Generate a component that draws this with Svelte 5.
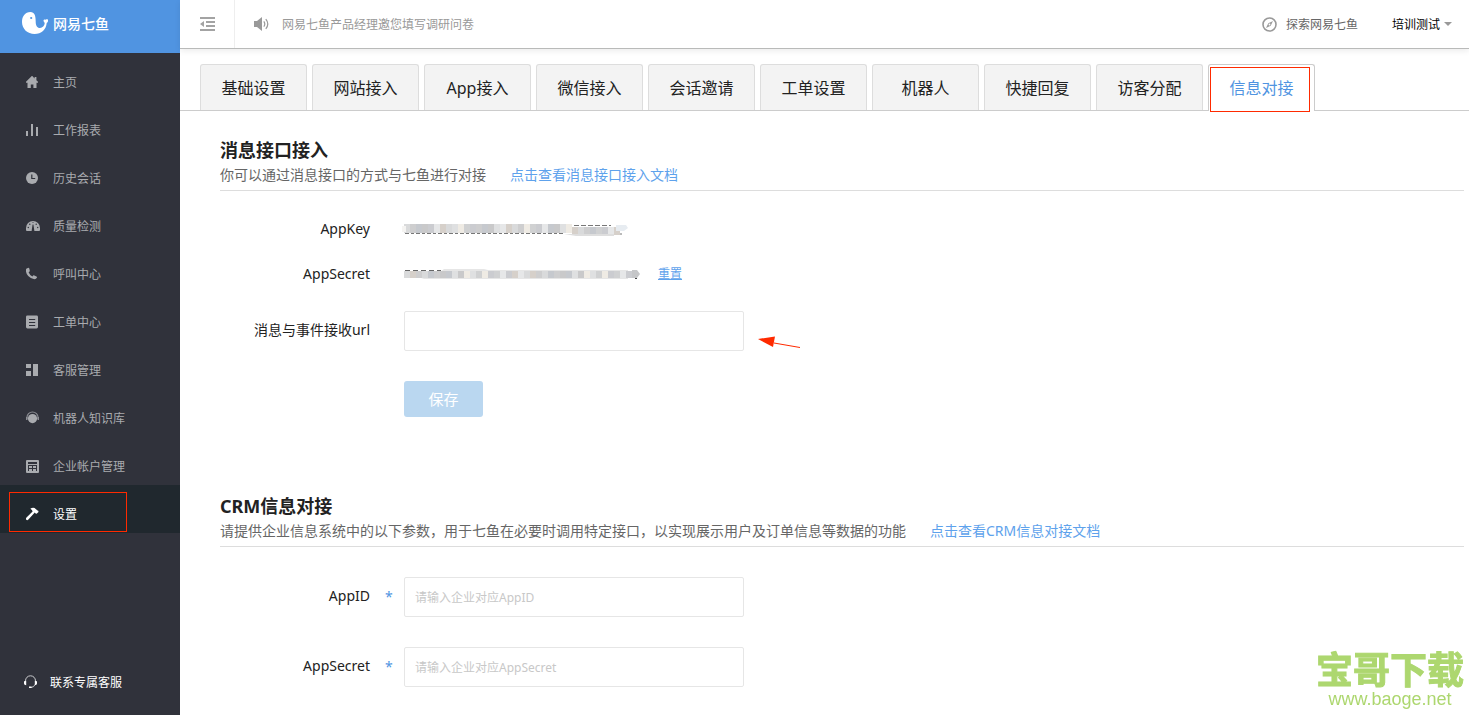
<script>
  const navItems = [
    { label: '主页', icon: 'home' },
    { label: '工作报表', icon: 'chart' },
    { label: '历史会话', icon: 'clock' },
    { label: '质量检测', icon: 'gauge' },
    { label: '呼叫中心', icon: 'phone' },
    { label: '工单中心', icon: 'list' },
    { label: '客服管理', icon: 'blocks' },
    { label: '机器人知识库', icon: 'robot' },
    { label: '企业帐户管理', icon: 'account' },
    { label: '设置', icon: 'hammer', active: true }
  ];

  const tabs = [
    '基础设置', '网站接入', 'App接入', '微信接入', '会话邀请',
    '工单设置', '机器人', '快捷回复', '访客分配', '信息对接'
  ];
  const activeTab = '信息对接';

  const greys = ['#d9dadb', '#c9c9ca', '#d0d1d2', '#d6d0ca', '#c6c9ce', '#efebe4', '#e6e7e8', '#cececf', '#dfe0e1', '#cbccd0'];
  const keyCells = Array.from({ length: 36 }, (_, i) => greys[(i * 7 + (i >> 2)) % greys.length]);
  const secretCells = Array.from({ length: 38 }, (_, i) => greys[(i * 3 + (i >> 1)) % greys.length]);

  let url = $state('');
  let appId = $state('');
  let appSecret = $state('');
</script>

{#snippet navIcon(name)}
  <svg class="nav-icon" viewBox="0 0 14 14" width="14" height="14" aria-hidden="true">
    {#if name === 'home'}
      <path d="M5.8 1 0 6.800v.900h1.500V13h3.300V9.400h2.600V13h3.100V7.700H12v-.900L10.400 5.200V2H8.600v1.500L6.300 1z" />
    {:else if name === 'chart'}
      <path d="M0 8h2v5H0zM5 1h2v12H5zM10 4h2v9h-2z" />
    {:else if name === 'clock'}
      <circle cx="6" cy="7" r="6" />
      <path d="M5.800 3.500V7.500H9.200" fill="none" stroke="#30323b" stroke-width="1.200" />
    {:else if name === 'gauge'}
      <path d="M7 2a7 7 0 0 0-7 7v2q0 1 1 1h12q1 0 1-1V9a7 7 0 0 0-7-7z" />
      <path d="M6.600 5.500h.8L8.400 12H5.600z" fill="#30323b" />
      <g fill="#30323b"><circle cx="2.300" cy="8.500" r=".7" /><circle cx="3.800" cy="5.200" r=".7" /><circle cx="7" cy="3.600" r=".5" /><circle cx="10.200" cy="5.200" r=".7" /><circle cx="11.700" cy="8.500" r=".7" /></g>
    {:else if name === 'phone'}
      <path d="M.3 1.800 2.400.8q.7 0 .9.8l.5 2.200q0 .7-.8 1.100l-.4.3q1 2.800 3.800 4.200l.7-.8q.5-.5 1.200-.2l2.200 1.100q.8.5.5 1.100-.8 1.600-2.600 1.600Q4.700 11.700 2.200 9-.3 6-.1 2.900q0-.7.4-1.100z" />
    {:else if name === 'list'}
      <rect x="0" y="0.500" width="12" height="13" rx="1.400" />
      <path d="M3 4.500h6.200M3 7.500h6.200M3 10.500h6.200" stroke="#30323b" stroke-width="1" />
    {:else if name === 'blocks'}
      <path d="M0 1h5v4H0zM0 8h5v5H0zM7 1h5v12H7z" />
    {:else if name === 'robot'}
      <circle cx="6.500" cy="7.600" r="4.600" />
      <path d="M.9 8V6.600a5.600 5.600 0 0 1 11.200 0V8" fill="none" stroke="#8c8e94" stroke-width="1.200" />
      <path d="M0 6h1.500v3H0zM11.500 6H13v3h-1.500z" fill="#8c8e94" />
    {:else if name === 'account'}
      <rect x="0" y="1" width="13" height="13" rx="1" />
      <path d="M2 3h9v2H2zM2 6h9v6H2z" fill="#30323b" />
      <path d="M3 7h3v2H3zM7 7h3v2H7zM3 10h3v2H3zM7 10h3v2H7z" />
    {:else if name === 'hammer'}
      <path d="M4.300 1.800Q6.300.2 8.600 1l2.900 2.600.8.200.2 1.200-1.900 1.700-1-.3-.8-1L2.400 12.600q-1.200 1.100-2.100.2-.9-1 .2-2.200l6.100-6.100q-.2-1.600-2.300-2.700z" />
    {/if}
  </svg>
{/snippet}

<div class="shell">
  <aside class="sidebar">
    <a class="brand" href="#home">
      <svg viewBox="0 0 26 23" width="26" height="23" aria-hidden="true">
        <path fill="#fff" d="M8.500 0C3 0 0 4.500 0 10c0 7 5.500 12 12.500 12 7 0 11.700-4.500 12.200-11 1.200-.8 1.600-2 1.200-3.400-1.100-.6-2-.4-2.600.1-.6-.5-1.300-.4-1.700.2-.2 1.300.3 2.300 1.200 2.900-.3 3.200-2.300 5.200-4.800 5.200-3 0-4.300-2.500-4.300-6.500C13.700 3.500 12.500 0 8.500 0z" />
        <circle cx="9.200" cy="6" r="1.100" fill="#5094e1" />
      </svg>
      <span>网易七鱼</span>
    </a>
    <nav>
      {#each navItems as item}
        <a class="nav-item" class:active={item.active} href={'#' + item.icon}>
          {@render navIcon(item.icon)}
          <span>{item.label}</span>
          {#if item.active}<i class="mark mark-nav"></i>{/if}
        </a>
      {/each}
    </nav>
    <a class="contact" href="#contact">
      <svg viewBox="0 0 13 14" width="13" height="14" aria-hidden="true">
        <path d="M1.500 7V5.800a5 5 0 0 1 10 0V7M11 9.500q-.8 2.700-4 3" fill="none" stroke="#c9cacd" stroke-width="1" />
        <path d="M0 6.500q.8-1 2.200-.8v4.600Q0 10.300 0 8.500zM13 6.500q-.8-1-2.200-.8v4.600q2.200 0 2.200-1.800zM5 11.600h2.500V13H5z" fill="#fff" />
      </svg>
      <span>联系专属客服</span>
    </a>
  </aside>

  <div class="page">
    <header class="topbar">
      <button class="collapse" type="button" aria-label="收起">
        <svg viewBox="0 0 15 14" width="15" height="14" aria-hidden="true">
          <path d="M0 0h15v2H0zM6 4h9v2H6zM6 8h9v2H6zM0 12h15v2H0zM0 7l4-3v6z" fill="#a3a3a3" />
        </svg>
      </button>
      <a class="notice" href="#survey">
        <svg viewBox="0 0 15 14" width="15" height="14" aria-hidden="true">
          <path d="M0 4h3l5-4v14L3 10H0z" fill="#999" />
          <path d="M9.800 4.300q2 2.700 0 5.400M11.800 2.200q4 4.800 0 9.600" fill="none" stroke="#999" stroke-width="1.200" />
        </svg>
        <span>网易七鱼产品经理邀您填写调研问卷</span>
      </a>
      <a class="explore" href="#explore">
        <svg viewBox="0 0 15 15" width="15" height="15" aria-hidden="true">
          <circle cx="7.500" cy="7.500" r="6.500" fill="none" stroke="#999" stroke-width="1.600" />
          <path d="M11 4 8.700 8.700 4 11l2.300-4.700z" fill="#999" />
          <circle cx="7.500" cy="7.500" r=".9" fill="#fff" />
        </svg>
        <span>探索网易七鱼</span>
      </a>
      <button class="user" type="button">
        <span>培训测试</span>
        <svg viewBox="0 0 8 4" width="8" height="4" aria-hidden="true"><path d="M0 0h8L4 4z" fill="#999" /></svg>
      </button>
    </header>

    <nav class="tabs">
      {#each tabs as tab}
        <a class="tab" class:current={tab === activeTab} href={'#' + tab}>
          {tab}
          {#if tab === activeTab}<i class="mark mark-tab"></i>{/if}
        </a>
      {/each}
    </nav>

    <main>
      <section>
        <h2>消息接口接入</h2>
        <p class="desc"><span>你可以通过消息接口的方式与七鱼进行对接</span><a href="#doc">点击查看消息接口接入文档</a></p>
        <div class="row short">
          <span class="label">AppKey</span>
          <svg class="mosaic" viewBox="0 0 240 16" width="240" height="16" aria-hidden="true">
            <path d="M1 12.500h160" stroke="#777" stroke-width="1" stroke-dasharray="4 2 3 2" />
            <path d="M170 4.500h37" stroke="#777" stroke-width="1" stroke-dasharray="5 2" />
            {#each keyCells as c, i}
              <rect x={i * 6} y={i > 27 ? 6 : 3} width="6" height={i > 27 ? 8 : 9} fill={c} />
            {/each}
            <path d="M-2 5h4v6h-4z" fill="#f5f4f2" />
            <path d="M160 13h50v2h-38z" fill="#dedede" />
            <path d="M212 4h10l2 3-4 3h-8z" fill="#e7ecf1" />
            <path d="M216 13h2" stroke="#777" />
          </svg>
        </div>
        <div class="row short">
          <span class="label">AppSecret</span>
          <svg class="mosaic" viewBox="0 0 240 16" width="240" height="16" aria-hidden="true">
            <path d="M1 4.500h36" stroke="#666" stroke-width="1" stroke-dasharray="5 3" />
            <path d="M0 6h36l4-3h40l4 1h140v9H20z" fill="#e6e6e6" />
            {#each secretCells as c, i}
              <rect x={i * 6} y="5" width="6" height="7" fill={c} />
            {/each}
            <path d="M228 4h5l3 4-3 4h-5z" fill="#c5c6c8" />
            <path d="M231 12.500h2" stroke="#444" />
          </svg>
          <a class="reset" href="#reset">重置</a>
        </div>
        <div class="row">
          <label class="label" for="url">消息与事件接收url</label>
          <span class="field">
            <input id="url" type="text" bind:value={url} />
            <svg class="arrow" viewBox="0 0 44 14" width="44" height="14" aria-hidden="true">
              <path d="M16 7 42 11.500" stroke="#ff2a00" fill="none" />
              <path d="M0 3 17 .5 15 11z" fill="#ff2a00" />
            </svg>
          </span>
        </div>
        <div class="row">
          <span class="label"></span>
          <button class="save" type="button">保存</button>
        </div>
      </section>

      <section>
        <h2>CRM信息对接</h2>
        <p class="desc"><span>请提供企业信息系统中的以下参数，用于七鱼在必要时调用特定接口，以实现展示用户及订单信息等数据的功能</span><a href="#crm-doc">点击查看CRM信息对接文档</a></p>
        <div class="row">
          <label class="label required" for="app-id">AppID</label>
          <input id="app-id" type="text" placeholder="请输入企业对应AppID" bind:value={appId} />
        </div>
        <div class="row">
          <label class="label required" for="app-secret">AppSecret</label>
          <input id="app-secret" type="text" placeholder="请输入企业对应AppSecret" bind:value={appSecret} />
        </div>
      </section>
    </main>
  </div>

  <div class="watermark">
    <strong>宝哥下载</strong>
    <span>www.baoge.net</span>
  </div>
</div>

<style>
  :global(body) {
    background: #fff;
  }
  .shell {
    display: flex;
    min-height: 100vh;
    font-family: "Noto Sans", "Noto Sans CJK SC", sans-serif;
    font-size: 14px;
    line-height: 20px;
    color: #222;
  }
  .shell * {
    box-sizing: border-box;
  }
  a {
    color: inherit;
    text-decoration: none;
  }
  button {
    border: 0;
    padding: 0;
    background: none;
    font: inherit;
    color: inherit;
  }
  svg {
    display: block;
    flex: none;
  }

  .sidebar {
    display: flex;
    flex-direction: column;
    flex: none;
    width: 180px;
    background: #30323b;
    color: #a9abaf;
    font-size: 12px;
  }
  .brand {
    display: flex;
    align-items: center;
    gap: 5px;
    height: 53px;
    padding: 0 22px 6px;
    background: #5094e1;
    color: #fff;
    font-size: 14px;
    font-weight: 500;
  }
  .nav-item {
    position: relative;
    display: flex;
    align-items: center;
    gap: 13px;
    height: 48px;
    padding: 10px 26px 0;
  }
  .nav-item span,
  .topbar span,
  .contact span {
    padding-top: 2px;
  }
  .nav-icon {
    fill: #a9abaf;
  }
  .nav-item.active {
    background: #20282e;
    color: #fff;
  }
  .active .nav-icon {
    fill: #fff;
  }
  .mark {
    position: absolute;
    border: 1px solid #ff2a00;
  }
  .mark-nav {
    left: 9px;
    top: 7px;
    width: 118px;
    height: 40px;
  }
  .contact {
    display: flex;
    align-items: center;
    gap: 13px;
    margin-top: auto;
    padding: 0 24px 22px;
    color: #fff;
  }

  .page {
    flex: 1;
    min-width: 0;
  }
  .topbar {
    display: flex;
    align-items: center;
    height: 49px;
    border-bottom: 1px solid #b9bab9;
    box-shadow: 0 2px 6px rgba(0, 0, 0, 0.08);
    font-size: 12px;
  }
  .collapse {
    display: flex;
    align-items: center;
    justify-content: center;
    width: 55px;
    height: 48px;
    border-right: 1px solid #eee;
  }
  .notice {
    display: flex;
    align-items: center;
    gap: 13px;
    margin: 0 auto 0 19px;
    color: #999;
  }
  .explore {
    display: flex;
    align-items: center;
    gap: 9px;
    margin-right: 34px;
    color: #666;
  }
  .user {
    display: flex;
    align-items: center;
    gap: 4px;
    margin-right: 17px;
    color: #000;
  }

  .tabs {
    display: flex;
    gap: 5px;
    padding: 15px 20px 0;
    border-bottom: 1px solid #ccc;
  }
  .tab {
    position: relative;
    width: 107px;
    height: 46px;
    border: 1px solid #ddd;
    border-bottom: 0;
    border-radius: 3px 3px 0 0;
    background: #f3f3f3;
    font-size: 16px;
    line-height: 46px;
    text-align: center;
    white-space: nowrap;
  }
  .tab.current {
    height: 47px;
    margin-bottom: -1px;
    border-color: #ccc;
    background: #fff;
    color: #5094e1;
  }
  .mark-tab {
    left: 1px;
    top: 2px;
    width: 100px;
    height: 45px;
  }

  main {
    padding: 26px 5px 28px 40px;
  }
  section + section {
    margin-top: 76px;
  }
  h2 {
    margin: 0;
    font-size: 18px;
    line-height: 26px;
    font-weight: 700;
  }
  .desc {
    display: flex;
    gap: 24px;
    margin: 0 0 30px;
    padding: 2px 0 5px;
    border-bottom: 1px solid #ddd;
    color: #666;
  }
  .desc a,
  .reset {
    color: #5ea2ec;
  }
  .row {
    display: flex;
    align-items: center;
    gap: 34px;
    margin-bottom: 30px;
  }
  .row:last-child {
    margin-bottom: 0;
  }
  .row.short {
    height: 15px;
  }
  .label {
    position: relative;
    flex: none;
    width: 150px;
    text-align: right;
  }
  label.label {
    padding-bottom: 2px;
  }
  .required::after {
    content: "*";
    position: absolute;
    left: 165px;
    top: 1px;
    color: #5094e1;
  }
  .mosaic {
    overflow: visible;
  }
  .reset {
    margin-left: -20px;
    font-size: 12px;
    text-decoration: underline;
  }
  .field {
    position: relative;
    display: flex;
  }
  .arrow {
    position: absolute;
    left: 354px;
    top: 25px;
  }
  input {
    width: 340px;
    height: 40px;
    padding: 0 10px;
    border: 1px solid #e6e6e6;
    border-radius: 2px;
    background: #fff;
    font: inherit;
    font-size: 12px;
    color: #222;
  }
  input::placeholder {
    color: #c8c8c8;
    opacity: 1;
  }
  .save {
    width: 79px;
    height: 36px;
    border-radius: 3px;
    background: #bad7f0;
    color: #fff;
    font-size: 15px;
  }

  .watermark {
    position: fixed;
    right: 5px;
    bottom: 6px;
    display: flex;
    flex-direction: column;
    align-items: center;
    color: #add76f;
  }
  .watermark strong {
    font-size: 37px;
    line-height: 38px;
    font-weight: 700;
    -webkit-text-stroke: 1px #add76f;
  }
  .watermark span {
    font-family: "Liberation Sans", Arial, sans-serif;
    font-size: 18px;
    line-height: 20px;
  }
</style>
